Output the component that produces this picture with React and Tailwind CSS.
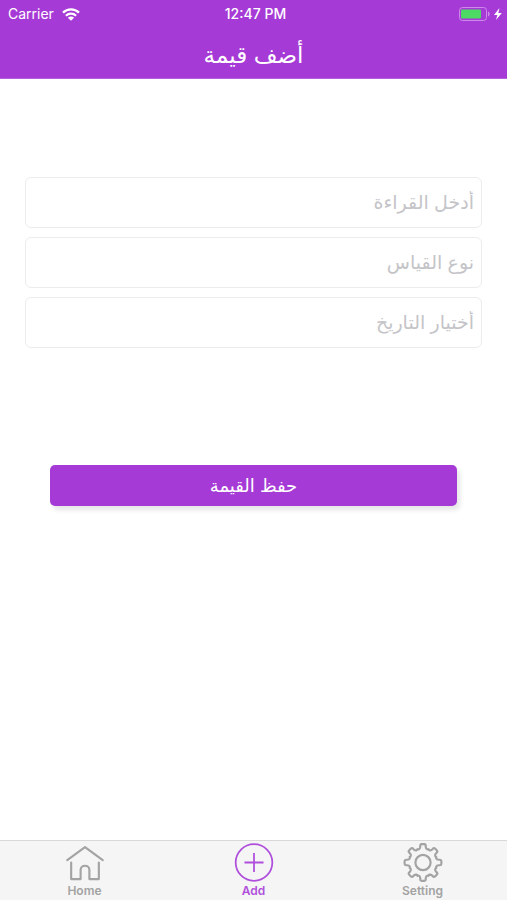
import { useState } from 'react';

const FIELDS = [
    { name: 'reading', placeholder: 'أدخل القراءة' },
    { name: 'type', placeholder: 'نوع القياس' },
    { name: 'date', placeholder: 'أختيار التاريخ' },
];

const TABS = [
    { id: 'home', label: 'Home', Icon: HomeIcon },
    { id: 'add', label: 'Add', Icon: AddIcon },
    { id: 'setting', label: 'Setting', Icon: GearIcon },
];

// Outline of an eight-toothed gear around (20, 20)
const gearPath = () => {
    const at = (r, deg) => {
        const a = (deg * Math.PI) / 180;
        return `${(20 + r * Math.sin(a)).toFixed(2)} ${(20 - r * Math.cos(a)).toFixed(2)}`;
    };
    let d = '';
    for (let i = 0; i < 8; i++) {
        const t = i * 45;
        d += `${i === 0 ? 'M' : 'L'}${at(16.2, t - 10)} `;
        d += `L${at(17, t - 9.5)} Q${at(18.9, t - 9)} ${at(18.9, t - 4)} `;
        d += `L${at(18.9, t + 4)} Q${at(18.9, t + 9)} ${at(17, t + 9.5)} `;
        d += `L${at(16.2, t + 10)} C${at(14, t + 13)} ${at(13.8, t + 19)} ${at(14.8, t + 22.5)} `;
        d += `C${at(13.8, t + 26)} ${at(14, t + 32)} ${at(16.2, t + 35)} `;
    }
    return `${d}Z`;
};

function HomeIcon() {
    return (
        <svg viewBox="0 0 40 40" className="w-10 h-10" fill="none" stroke="currentColor" strokeWidth="2.2" strokeLinecap="round" strokeLinejoin="round" aria-hidden="true">
            <path d="M1.8 17.6 20 4.2l18.2 13.400" />
            <path d="M5.800 20v17H15.500V27.500c0-5.600 9-5.600 9 0V37h9.700V20" />
        </svg>
    );
}

function AddIcon() {
    return (
        <svg viewBox="0 0 40 40" className="w-10 h-10" fill="none" stroke="currentColor" strokeWidth="1.8" aria-hidden="true">
            <circle cx="20" cy="20" r="18.8" />
            <path d="M20 10.200v19.600M10.200 20h19.600" />
        </svg>
    );
}

function GearIcon() {
    return (
        <svg viewBox="0 0 40 40" className="w-10 h-10" fill="none" stroke="currentColor" strokeWidth="2.200" strokeLinejoin="round" aria-hidden="true">
            <path d={gearPath()} />
            <circle cx="20" cy="20" r="7.8" />
        </svg>
    );
}

function StatusBar() {
    return (
        <div className="grid grid-cols-3 items-center h-7 pl-2 pr-1 text-sm">
            <div className="flex items-center gap-2">
                <span>Carrier</span>
                <svg viewBox="0 0 18 13" className="w-[18px] h-[13px]" fill="none" stroke="currentColor" strokeWidth="2.3" aria-hidden="true">
                    <path d="M1 4.600a11.500 11.500 0 0 1 16 0" />
                    <path d="M3.900 7.700a7.300 7.300 0 0 1 10.200 0" />
                    <path d="M9 12.800 5.900 9.700a4.400 4.400 0 0 1 6.200 0z" fill="currentColor" stroke="none" />
                </svg>
            </div>
            <span className="text-center font-medium">12:47 PM</span>
            <svg viewBox="0 0 44 14" className="justify-self-end w-11 h-[14px]" aria-hidden="true">
                <rect x="0.5" y="0.5" width="27" height="13" rx="3" fill="none" stroke="#d088ec" />
                <rect x="2" y="2.5" width="20" height="9" rx="1" fill="#4cd964" />
                <path d="M29 4.500v5c2.200-.8 2.200-4.200 0-5z" fill="#d088ec" />
                <path d="M40.500 1 35 8h3.400L37 13l5.800-7h-3.500z" fill="#fff" />
            </svg>
        </div>
    );
}

export default function App() {
    const [values, setValues] = useState({ reading: '', type: '', date: '' });
    const [activeTab, setActiveTab] = useState('add');

    const handleChange = (e) => {
        setValues({ ...values, [e.target.name]: e.target.value });
    };

    return (
        <div className="min-h-screen flex flex-col bg-white font-['Inter','DejaVu_Sans',sans-serif]">
            <header className="bg-[#a63ad6] text-white border-b border-[#b65fdd]">
                <StatusBar />
                <h1 dir="rtl" className="h-[50px] text-center text-[23px] leading-[54px]">
                    أضف قيمة
                </h1>
            </header>

            <main dir="rtl" className="flex-1">
                <form onSubmit={(e) => e.preventDefault()} className="pt-[98px] px-[25px]">
                    <div className="flex flex-col gap-[9px]">
                        {FIELDS.map((field) => (
                            <input
                                key={field.name}
                                type="text"
                                name={field.name}
                                aria-label={field.placeholder}
                                placeholder={field.placeholder}
                                value={values[field.name]}
                                onChange={handleChange}
                                className="w-full h-[51px] px-[7px] text-[19px] text-gray-800 placeholder:text-[#c4c4c8] border border-[#ececec] rounded-md outline-none"
                            />
                        ))}
                    </div>
                    <div className="px-[25px] mt-[117px]">
                        <button
                            type="submit"
                            className="w-full h-[41px] bg-[#a63ad6] text-white text-lg leading-[41px] rounded-[5px] shadow-[3px_4px_5px_rgba(0,0,0,0.1)]"
                        >
                            حفظ القيمة
                        </button>
                    </div>
                </form>
            </main>

            <nav className="flex h-[60px] bg-[#f5f5f5] border-t border-[#d8d8d8]">
                {TABS.map(({ id, label, Icon }) => (
                    <button
                        key={id}
                        type="button"
                        onClick={() => setActiveTab(id)}
                        className={`flex-1 flex flex-col items-center pt-[2px] text-xs leading-[18px] font-semibold ${
                            activeTab === id ? 'text-[#b04fdc]' : 'text-[#a3a3a3]'
                        }`}
                    >
                        <Icon />
                        {label}
                    </button>
                ))}
            </nav>
        </div>
    );
}
